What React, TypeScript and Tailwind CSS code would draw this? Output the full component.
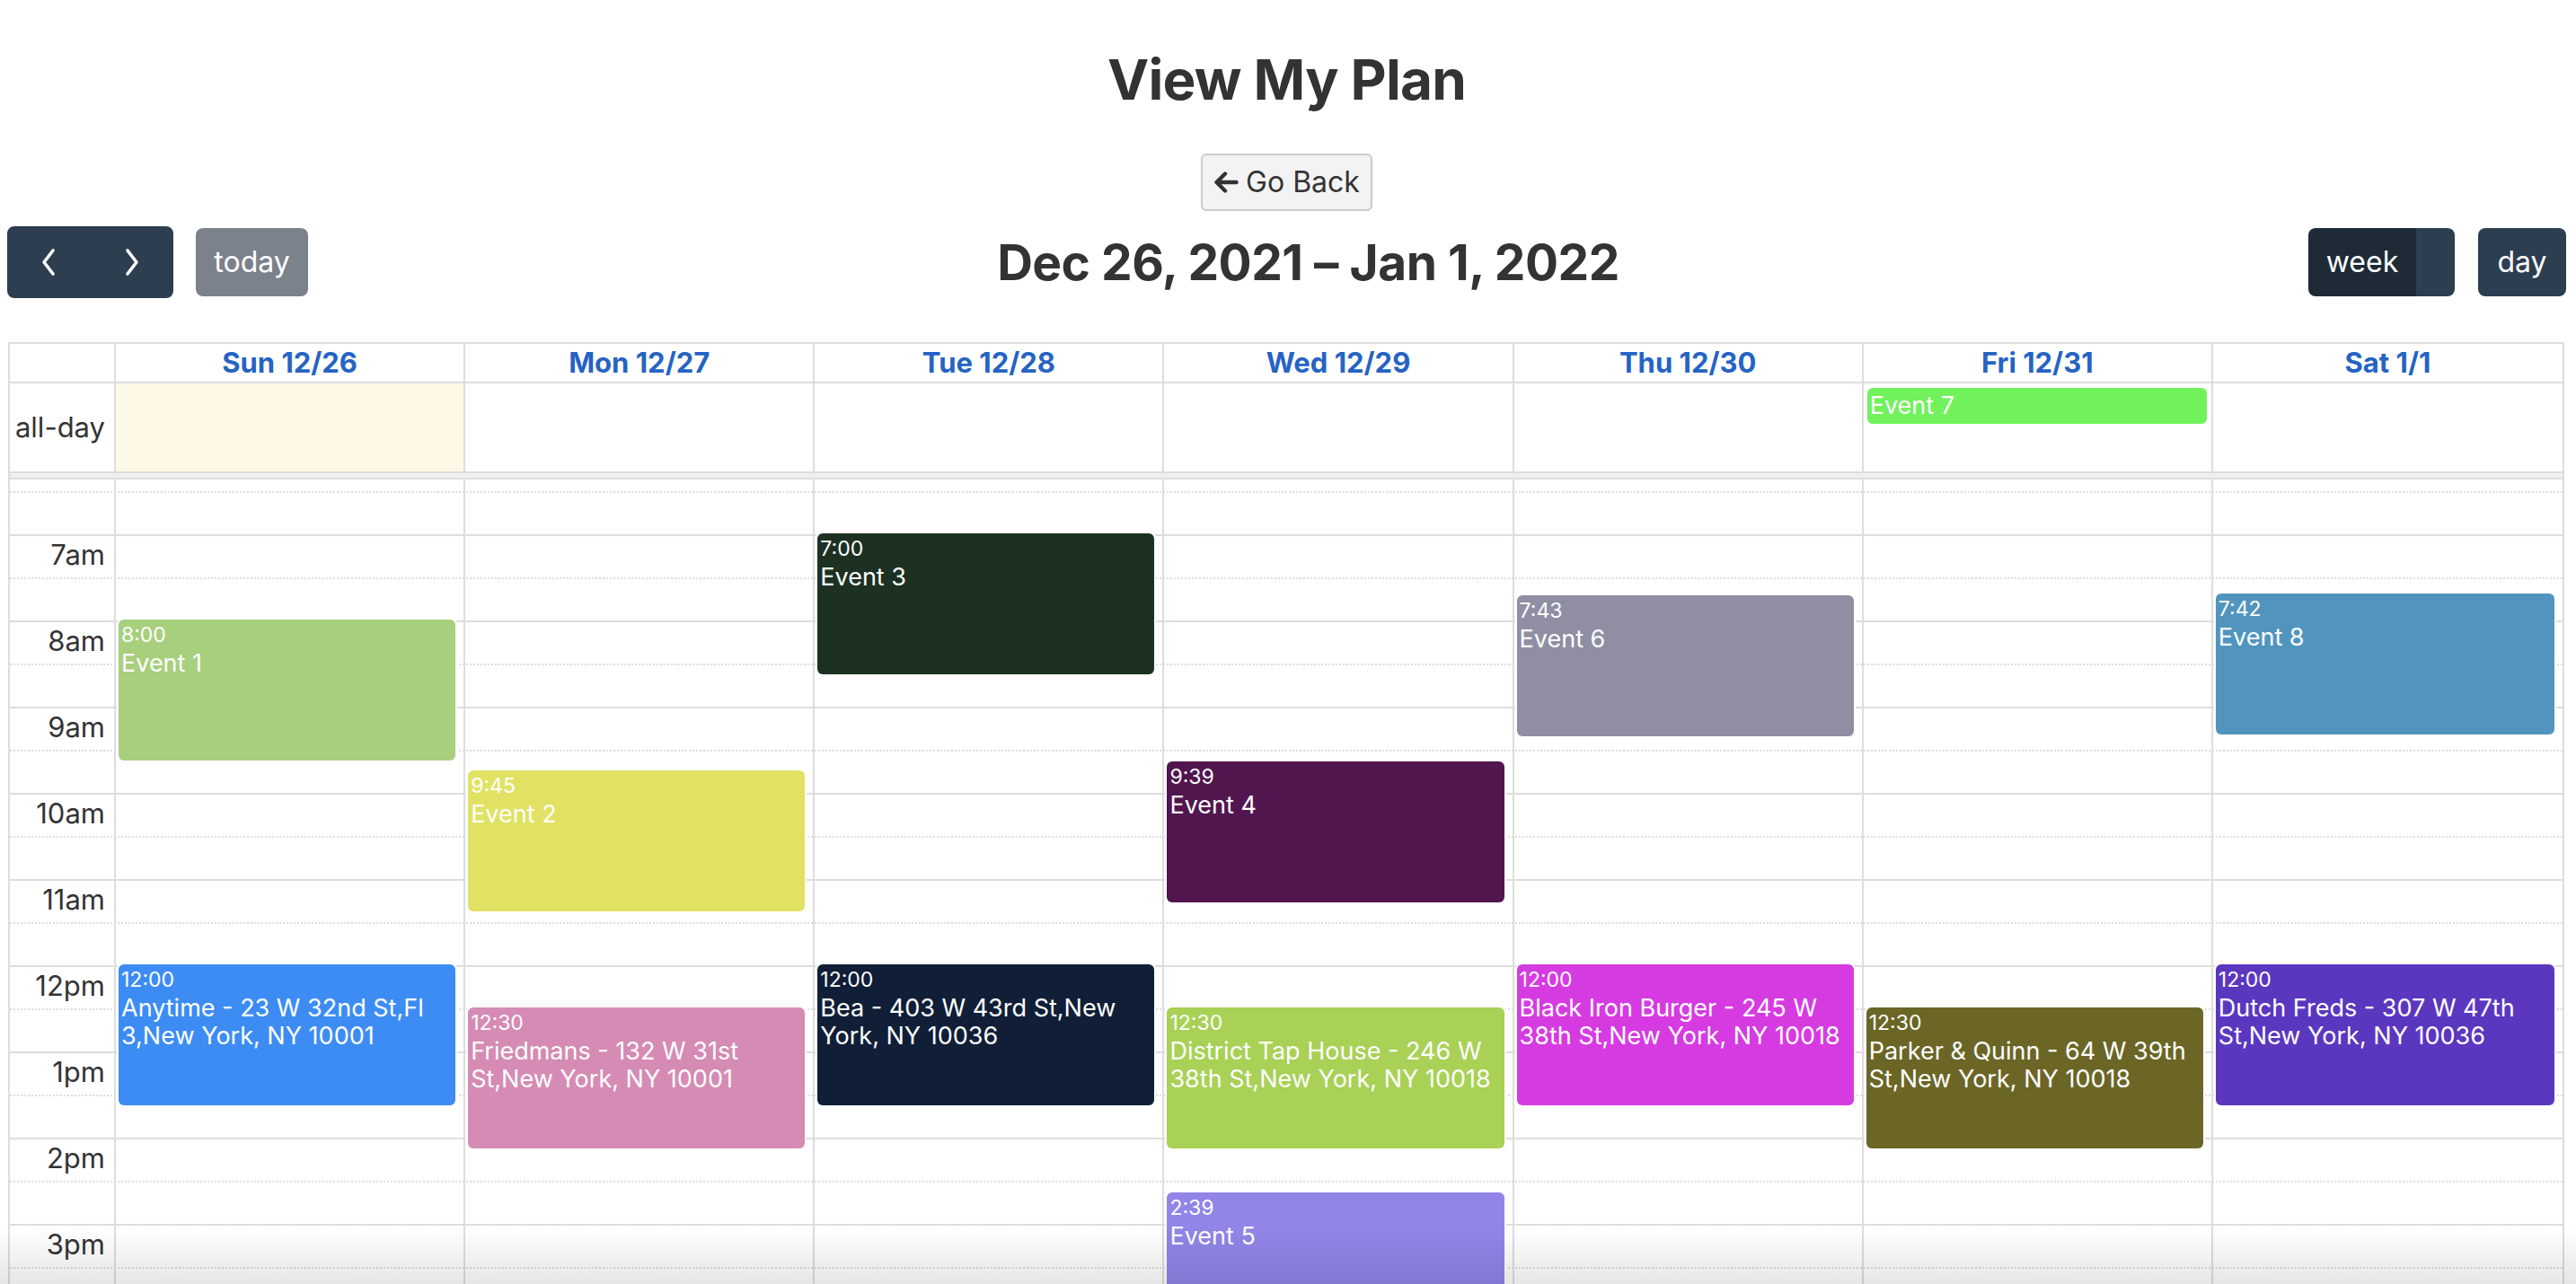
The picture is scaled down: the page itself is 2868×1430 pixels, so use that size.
import React from 'react';

type CalEvent = {
    day: number;
    start: number; // minutes after 6:00
    time: string;
    title: string;
    bg: string;
};

const hm = (h: number, m: number) => (h - 6) * 60 + m;

const days = ['Sun 12/26', 'Mon 12/27', 'Tue 12/28', 'Wed 12/29', 'Thu 12/30', 'Fri 12/31', 'Sat 1/1'];

const events: CalEvent[] = [
    { day: 0, start: hm(8, 0), time: '8:00', title: 'Event 1', bg: 'bg-[#a8cf7e]' },
    { day: 0, start: hm(12, 0), time: '12:00', title: 'Anytime - 23 W 32nd St,Fl 3,New York, NY 10001', bg: 'bg-[#3d8cf4]' },
    { day: 1, start: hm(9, 45), time: '9:45', title: 'Event 2', bg: 'bg-[#e1e264]' },
    { day: 1, start: hm(12, 30), time: '12:30', title: 'Friedmans - 132 W 31st St,New York, NY 10001', bg: 'bg-[#d58bb3]' },
    { day: 2, start: hm(7, 0), time: '7:00', title: 'Event 3', bg: 'bg-[#1c3122]' },
    { day: 2, start: hm(12, 0), time: '12:00', title: 'Bea - 403 W 43rd St,New York, NY 10036', bg: 'bg-[#101f37]' },
    { day: 3, start: hm(9, 39), time: '9:39', title: 'Event 4', bg: 'bg-[#52164f]' },
    { day: 3, start: hm(12, 30), time: '12:30', title: 'District Tap House - 246 W 38th St,New York, NY 10018', bg: 'bg-[#a8d156]' },
    { day: 3, start: hm(14, 39), time: '2:39', title: 'Event 5', bg: 'bg-[#9185e8]' },
    { day: 4, start: hm(7, 43), time: '7:43', title: 'Event 6', bg: 'bg-[#8f8ea3]' },
    { day: 4, start: hm(12, 0), time: '12:00', title: 'Black Iron Burger - 245 W 38th St,New York, NY 10018', bg: 'bg-[#d63be2]' },
    { day: 5, start: hm(12, 30), time: '12:30', title: 'Parker & Quinn - 64 W 39th St,New York, NY 10018', bg: 'bg-[#6b6626]' },
    { day: 6, start: hm(7, 42), time: '7:42', title: 'Event 8', bg: 'bg-[#5195bf]' },
    { day: 6, start: hm(12, 0), time: '12:00', title: 'Dutch Freds - 307 W 47th St,New York, NY 10036', bg: 'bg-[#5b37c0]' },
];

const hourLabel = (h: number) => (h === 12 ? '12pm' : h > 12 ? `${h - 12}pm` : `${h}am`);

// half-hour slots from 6am on, enough to fill the visible part
const slots = Array.from({ length: 20 }, (_, i) => ({ hour: 6 + Math.floor(i / 2), half: i % 2 === 1 }));

const Chevron = ({ dir }: { dir: 'left' | 'right' }) => (
    <svg width="16" height="32" viewBox="0 0 16 32" fill="none">
        <polyline
            points={dir === 'left' ? '13 3 3 16 13 29' : '3 3 13 16 3 29'}
            stroke="white"
            strokeWidth="3.6"
            strokeLinecap="round"
            strokeLinejoin="round"
        />
    </svg>
);

const App: React.FC = () => {
    return (
        <div className="relative h-[1430px] overflow-hidden bg-white font-['Inter',sans-serif] text-[#333]">
            <div className="pt-[52px] pl-[8px] pr-[11px]">
                <h1 className="text-center text-[62px] leading-[74px] font-bold tracking-[-0.8px] text-[#333]">View My Plan</h1>

                <div className="flex justify-center mt-[45px]">
                    <button className="flex items-center gap-[8px] h-[64px] px-[12px] border-2 border-[#cbcbcb] rounded-[6px] bg-[#f3f3f3] text-[32px] leading-[48px] text-[#333]">
                        <svg width="28" height="24" viewBox="0 0 28 24" fill="none">
                            <path d="M25.5 12H3.5M13 2.5 3.5 12 13 21.5" stroke="#333" strokeWidth="4.4" strokeLinecap="round" strokeLinejoin="round" />
                        </svg>
                        <span>Go Back</span>
                    </button>
                </div>

                {/* toolbar */}
                <div className="flex items-center justify-between h-[80px] mt-[17px]">
                    <div className="flex items-center">
                        <div className="flex h-[80px] rounded-[8px] overflow-hidden bg-[#2c3e50]">
                            <button className="w-[92px] flex items-center justify-center"><Chevron dir="left" /></button>
                            <button className="w-[93px] flex items-center justify-center"><Chevron dir="right" /></button>
                        </div>
                        <button className="ml-[25px] w-[125px] h-[76px] rounded-[8px] bg-[#7b828c] text-white text-[32px]">today</button>
                    </div>
                    <h2 className="text-[55px] font-bold text-[#333] tracking-[-0.5px]">Dec 26, 2021 – Jan 1, 2022</h2>
                    <div className="flex items-center">
                        <div className="flex h-[76px] rounded-[8px] overflow-hidden">
                            <button className="w-[120px] bg-[#1e2b37] text-white text-[32px]">week</button>
                            <div className="w-[43px] bg-[#2c3e50]" />
                        </div>
                        <button className="ml-[26px] w-[98px] h-[76px] rounded-[8px] bg-[#2c3e50] text-white text-[32px]">day</button>
                    </div>
                </div>

                {/* calendar */}
                <div className="mt-[49px] ml-[1px] mr-[2px] border-l-2 border-t-2 border-r-2 border-[#ddd]">
                    <div className="grid grid-cols-[118px_repeat(7,minmax(0,1fr))]">
                        <div className="h-[44px] border-r-2 border-b-2 border-[#ddd]" />
                        {days.map((d, i) => (
                            <div
                                key={d}
                                className={`h-[44px] border-b-2 border-[#ddd] text-center text-[31px] leading-[42px] font-bold text-[#2563c4] ${i < 6 ? 'border-r-2' : ''}`}
                            >
                                {d}
                            </div>
                        ))}
                        <div className="h-[100px] border-r-2 border-b-2 border-[#ddd] flex items-center justify-end pr-[10px] text-[31px] text-[#333]">all-day</div>
                        {days.map((d, i) => (
                            <div
                                key={d}
                                className={`h-[100px] border-b-2 border-[#ddd] ${i < 6 ? 'border-r-2' : ''} ${i === 0 ? 'bg-[#fef9e6]' : ''}`}
                            >
                                {i === 5 && (
                                    <div className="mt-[5px] ml-[4px] mr-[5px] h-[40px] rounded-[6px] bg-[#71f25c] px-[3px] text-[27px] leading-[40px] text-white">Event 7</div>
                                )}
                            </div>
                        ))}
                    </div>
                    <div className="h-[7px] bg-[#efefef] border-b-2 border-[#ddd]" />

                    <div className="relative h-[896px] overflow-hidden">
                        <div className="relative -mt-[35px]">
                            {slots.map((s, i) => (
                                <div key={i} className={`flex h-[48px] border-t-2 border-[#ddd] ${s.half ? 'border-dotted' : ''}`}>
                                    <div className="w-[116px] pr-[10px] text-right text-[31px] leading-[42px] text-[#333]">
                                        {!s.half && s.hour > 6 && hourLabel(s.hour)}
                                    </div>
                                </div>
                            ))}

                            <div className="absolute inset-0 grid grid-cols-[118px_repeat(7,minmax(0,1fr))]">
                                <div className="border-r-2 border-[#ddd]" />
                                {days.map((d, i) => (
                                    <div key={d} className={`relative border-[#ddd] ${i < 6 ? 'border-r-2' : ''}`}>
                                        {events
                                            .filter(e => e.day === i)
                                            .map(e => (
                                                <div
                                                    key={e.title}
                                                    className={`absolute left-[3px] right-[9px] h-[157px] rounded-[6px] shadow-[0_0_0_2px_#fff] px-[3px] pt-[4px] overflow-hidden text-white ${e.bg}`}
                                                    style={{ top: e.start * 1.6 - 1 }}
                                                >
                                                    <div className="text-[23px] leading-[27px] mb-[2px] whitespace-nowrap">{e.time}</div>
                                                    <div className="text-[27px] leading-[31px]">{e.title}</div>
                                                </div>
                                            ))}
                                    </div>
                                ))}
                            </div>
                        </div>
                    </div>
                </div>
            </div>

            <div className="pointer-events-none absolute bottom-0 left-0 right-0 h-[64px] bg-linear-to-b from-transparent to-black/10" />
        </div>
    );
};

export default App;
